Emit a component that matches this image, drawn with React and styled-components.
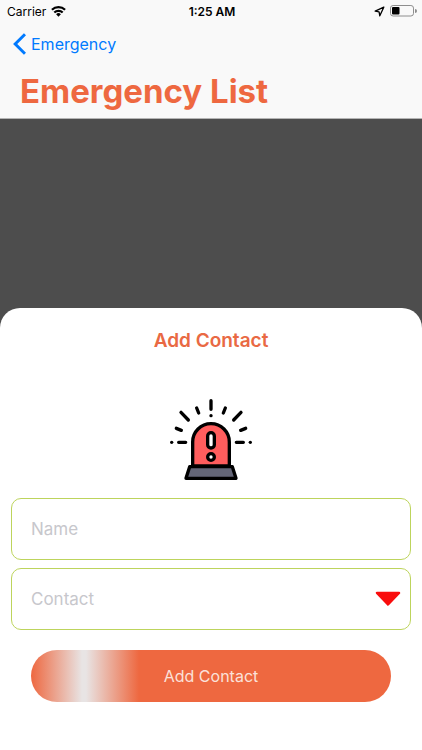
import React from 'react'
import styled, { createGlobalStyle } from 'styled-components'

const App = () => {
    return (
        <Screen>
            <GlobalStyle />
            <Header>
                <StatusBar>
                    <Carrier>
                        Carrier
                        <WifiIcon />
                    </Carrier>
                    <Clock>1:25 AM</Clock>
                    <Indicators>
                        <LocationIcon />
                        <BatteryIcon />
                    </Indicators>
                </StatusBar>
                <NavBar>
                    <BackLink href="#emergency">
                        <ChevronIcon />
                        Emergency
                    </BackLink>
                </NavBar>
                <PageTitle>Emergency List</PageTitle>
            </Header>
            <Backdrop>
                <Sheet role="dialog" aria-labelledby="sheet-title">
                    <SheetTitle id="sheet-title">Add Contact</SheetTitle>
                    <SirenIcon />
                    <Form onSubmit={(e) => e.preventDefault()}>
                        <NameInput type="text" placeholder="Name" aria-label="Name" />
                        <SelectWrapper>
                            <ContactSelect defaultValue="" aria-label="Contact">
                                <option value="" disabled>Contact</option>
                            </ContactSelect>
                            <ArrowIcon />
                        </SelectWrapper>
                        <SubmitButton type="submit">Add Contact</SubmitButton>
                    </Form>
                </Sheet>
            </Backdrop>
        </Screen>
    )
}

export default App

const WifiIcon = () => (
    <svg width="15" height="11" viewBox="0 0 15 11" aria-hidden="true">
        <g fill="none" stroke="#000" strokeWidth="2.2">
            <path d="M0.9 3.8a9.5 9.5 0 0 1 13.2 0" />
            <path d="M3.3 6.5a6 6 0 0 1 8.4 0" />
        </g>
        <path d="M5.1 8.2a3.4 3.4 0 0 1 4.8 0L7.5 10.7z" />
    </svg>
)

const LocationIcon = () => (
    <svg width="11" height="11" viewBox="0 0 11 11" aria-hidden="true">
        <path d="M9.8 1.2 1.2 5.2l3.9 0.6 0.7 4z" fill="none" stroke="#000" strokeWidth="1.3" strokeLinejoin="round" />
    </svg>
)

const BatteryIcon = () => (
    <svg width="27" height="12" viewBox="0 0 27 12" aria-hidden="true">
        <rect x="0.5" y="0.5" width="23" height="10.5" rx="2.6" fill="none" stroke="#8e8e8e" />
        <rect x="2" y="2" width="7.5" height="7.5" rx="1" />
        <path d="M25 4v4a2 2 0 0 0 0-4z" fill="#8e8e8e" />
    </svg>
)

const ChevronIcon = () => (
    <svg width="13" height="22" viewBox="0 0 13 22" aria-hidden="true">
        <path d="M12 1.2 2.2 11l9.8 9.8" fill="none" stroke="#007aff" strokeWidth="3" />
    </svg>
)

const ArrowIcon = () => (
    <svg width="26" height="16" viewBox="0 0 26 16" aria-hidden="true">
        <path d="M2 2h22L13 13.5z" fill="#f90d0d" stroke="#f90d0d" strokeWidth="2.5" strokeLinejoin="round" />
    </svg>
)

const SirenIcon = () => (
    <Siren viewBox="0 0 246 246" role="img" aria-label="Siren">
        <g stroke="#000" strokeWidth="10" strokeLinecap="round" strokeLinejoin="round">
            <path d="M68 204v-72a55 55 0 0 1 110 0v72z" fill="#ff5d5d" />
            <path d="M59 206h128l11 35H48z" fill="#646678" />
            <rect x="113" y="104" width="20" height="46" rx="10" fill="#fff" />
            <circle cx="123" cy="177" r="10" fill="#fff" />
            <g fill="none">
                <path d="M123 8v26M33 43l22 23M213 43l-22 23" />
                <path d="M80 30l6 15M166 30l-6 15" />
                <path d="M19 91l15 6M227 91l-15 6" />
                <path d="M26 133h21M199 133h21" />
            </g>
        </g>
        <circle cx="123" cy="53" r="5" />
        <circle cx="5" cy="133" r="5" />
        <circle cx="241" cy="133" r="5" />
    </Siren>
)

const GlobalStyle = createGlobalStyle`
    * {
        box-sizing: border-box;
    }
    body {
        margin: 0;
    }
    body, input, select, button {
        font-family: Inter, "Liberation Sans", sans-serif;
    }
`

const Screen = styled.div`
    display: flex;
    flex-direction: column;
    min-height: 100vh;
`

const Header = styled.header`
    background: #f9f9f9;
    border-bottom: 1px solid #b4b4b4;
`

const StatusBar = styled.div`
    display: grid;
    grid-template-columns: 1fr auto 1fr;
    align-items: center;
    height: 22px;
    padding: 0 5px 0 7px;
    font-size: 12px;
    color: #000;
`

const Carrier = styled.div`
    display: flex;
    align-items: center;
    gap: 5px;
`

const Clock = styled.time`
    font-weight: 600;
`

const Indicators = styled.div`
    display: flex;
    align-items: center;
    justify-content: flex-end;
    gap: 5px;
`

const NavBar = styled.nav`
    display: flex;
    align-items: center;
    height: 44px;
    padding: 0 13px;
`

const BackLink = styled.a`
    display: flex;
    align-items: center;
    gap: 5px;
    font-size: 16px;
    color: #007aff;
    text-decoration: none;
`

const PageTitle = styled.h1`
    margin: 0;
    padding: 5px 20px 7px;
    font-size: 33px;
    line-height: 40px;
    font-weight: 700;
    color: #ee6840;
`

const Backdrop = styled.main`
    display: flex;
    flex: 1;
    flex-direction: column;
    justify-content: flex-end;
    background: #4d4d4d;
`

const Sheet = styled.section`
    display: flex;
    flex-direction: column;
    align-items: center;
    padding: 20px 11px 48px;
    border-radius: 20px 20px 0 0;
    background: #fff;
`

const SheetTitle = styled.h2`
    margin: 0;
    font-size: 19px;
    line-height: 26px;
    font-weight: 600;
    color: #e96943;
`

const Siren = styled.svg`
    width: 82px;
    height: 82px;
    margin: 44px 0 18px;
`

const Form = styled.form`
    display: flex;
    flex-direction: column;
    gap: 8px;
    width: 100%;
`

const NameInput = styled.input`
    width: 100%;
    height: 62px;
    padding: 0 19px;
    border: 1px solid #bdd45c;
    border-radius: 10px;
    background: #fff;
    font-size: 17px;
    color: #000;

    &::placeholder {
        color: #c7c7cc;
        opacity: 1;
    }
`

const SelectWrapper = styled.div`
    display: grid;
    align-items: center;

    > * {
        grid-area: 1 / 1;
    }

    svg {
        justify-self: end;
        margin-right: 10px;
        pointer-events: none;
    }
`

const ContactSelect = styled.select`
    appearance: none;
    width: 100%;
    height: 62px;
    padding: 0 19px;
    border: 1px solid #bdd45c;
    border-radius: 10px;
    background: #fff;
    font-size: 17px;
    color: #c7c7cc;
`

const SubmitButton = styled.button`
    height: 52px;
    margin: 12px 20px 0;
    border: 0;
    border-radius: 26px;
    background: linear-gradient(90deg, #ee6840 0, #e8e4e4 51px, #e8e4e4 55px, #ee6840 108px);
    font-size: 16px;
    font-weight: 400;
    color: #fbe1d9;
`
